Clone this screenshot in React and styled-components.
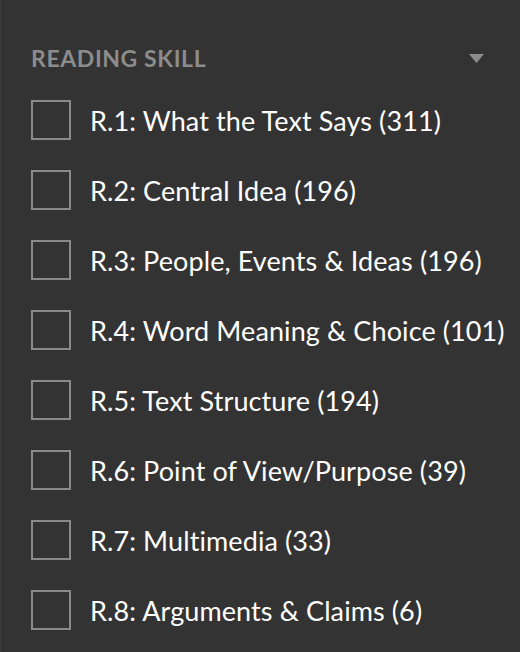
import React from "react";
import styled, { createGlobalStyle } from "styled-components";

const Global = createGlobalStyle`
  html, body { margin: 0; padding: 0; background: #ffffff; }
  body { font-family: Lato, "Open Sans", sans-serif; }
`;

const Panel = styled.div`
  width: 520px;
  height: 652px;
  box-sizing: border-box;
  background: #333333;
  border-left: 1px solid #3c3c3c;
  padding: 40px 0 0 30px;
  overflow: hidden;
`;

const Header = styled.div`
  display: flex;
  align-items: center;
  justify-content: space-between;
  padding-right: 36px;
  height: 36px;
`;

const Title = styled.div`
  color: #8c8c8c;
  font-family: Lato, sans-serif;
  font-weight: 700;
  font-size: 23px;
  letter-spacing: 0.6px;
`;

const Caret = styled.svg`
  width: 15px;
  height: 9px;
  display: block;
`;

const List = styled.div`
  display: flex;
  flex-direction: column;
  gap: 30px;
  margin-top: 24px;
`;

const Row = styled.label`
  display: flex;
  align-items: center;
  gap: 19px;
  height: 40px;
`;

const Box = styled.span`
  width: 40px;
  height: 40px;
  box-sizing: border-box;
  border: 2px solid #8a8a8a;
  flex: none;
`;

const Label = styled.span`
  color: #ffffff;
  font-family: Lato, sans-serif;
  font-size: 27px;
  letter-spacing: 0.1px;
  white-space: nowrap;
`;

const items = [
  "R.1: What the Text Says (311)",
  "R.2: Central Idea (196)",
  "R.3: People, Events & Ideas (196)",
  "R.4: Word Meaning & Choice (101)",
  "R.5: Text Structure (194)",
  "R.6: Point of View/Purpose (39)",
  "R.7: Multimedia (33)",
  "R.8: Arguments & Claims (6)",
];

export default function App() {
  return (
    <>
      <Global />
      <Panel>
        <Header>
          <Title>READING SKILL</Title>
          <Caret viewBox="0 0 15 9">
            <path d="M0 0 H15 L7.5 9 Z" fill="#8c8c8c" />
          </Caret>
        </Header>
        <List>
          {items.map((t) => (
            <Row key={t}>
              <Box />
              <Label>{t}</Label>
            </Row>
          ))}
        </List>
      </Panel>
    </>
  );
}
